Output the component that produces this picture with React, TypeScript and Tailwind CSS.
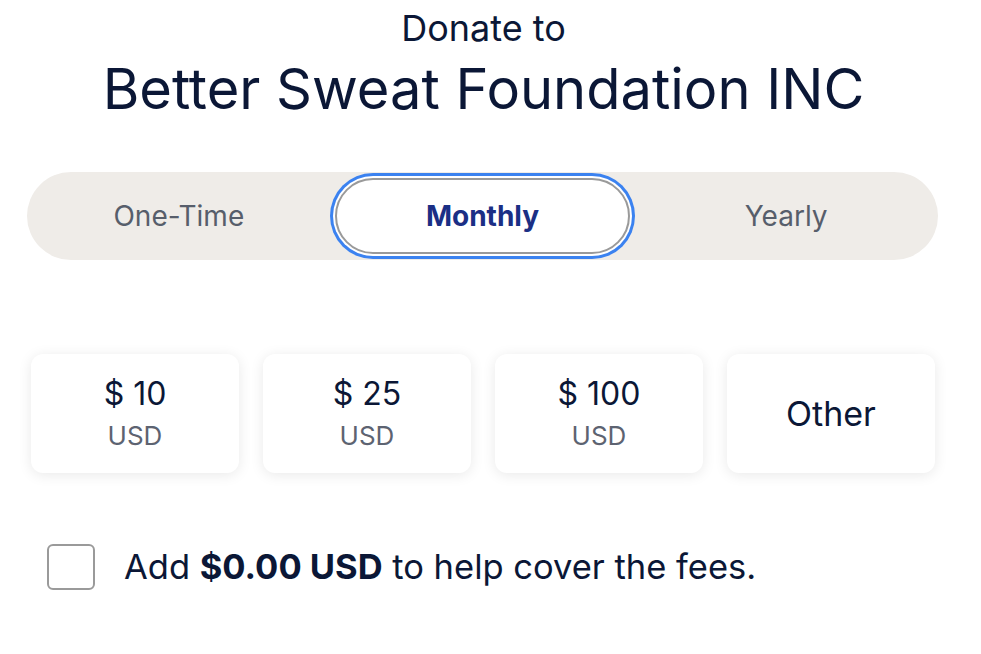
export default function App() {
  const amounts = ["10", "25", "100"];
  return (
    <div
      className="w-[981px] h-[654px] bg-white text-[#0b1736] overflow-hidden"
      style={{ fontFamily: "Inter, 'Noto Sans', sans-serif" }}
    >
      {/* Header */}
      <div className="pr-[14px] pt-[6px] text-center">
        <p className="text-[36px] leading-[44px]">Donate to</p>
        <h1 className="mt-[7px] text-[56px] leading-[64px] font-normal">
          Better Sweat Foundation INC
        </h1>
      </div>

      {/* Frequency toggle */}
      <div className="ml-[27px] mt-[51px] w-[911px] h-[88px] rounded-full bg-[#efece8] flex items-center">
        <button className="flex-1 h-full text-[28px] text-[#575e6b]">One-Time</button>
        <div className="flex-1 h-full flex items-center justify-center">
          <button className="w-[295px] h-[76px] rounded-full bg-white border-2 border-[#9a9a9a] ring-[3px] ring-[#3b82f0] ring-offset-2 text-[28px] font-bold text-[#1b2f85]">
            Monthly
          </button>
        </div>
        <button className="flex-1 h-full text-[28px] text-[#575e6b]">Yearly</button>
      </div>

      {/* Amounts */}
      <div className="ml-[31px] mt-[94px] w-[904px] grid grid-cols-4 gap-6">
        {amounts.map((a) => (
          <div
            key={a}
            className="h-[119px] rounded-xl bg-white shadow-[0_2px_14px_rgba(0,0,0,0.09)] flex flex-col items-center justify-center"
          >
            <span className="text-[32px] leading-[38px]">$ {a}</span>
            <span className="mt-[7px] text-[26px] leading-[32px] text-[#5d6371]">USD</span>
          </div>
        ))}
        <div className="h-[119px] rounded-xl bg-white shadow-[0_2px_14px_rgba(0,0,0,0.09)] flex items-center justify-center">
          <span className="text-[34px]">Other</span>
        </div>
      </div>

      {/* Fee checkbox */}
      <label className="ml-[47px] mt-[68px] flex items-center gap-[29px]">
        <span className="w-[48px] h-[46px] rounded-md border-2 border-[#9a9a9a] bg-white" />
        <span className="text-[34.5px]">
          Add <b className="font-bold">$0.00 USD</b> to help cover the fees.
        </span>
      </label>
    </div>
  );
}
